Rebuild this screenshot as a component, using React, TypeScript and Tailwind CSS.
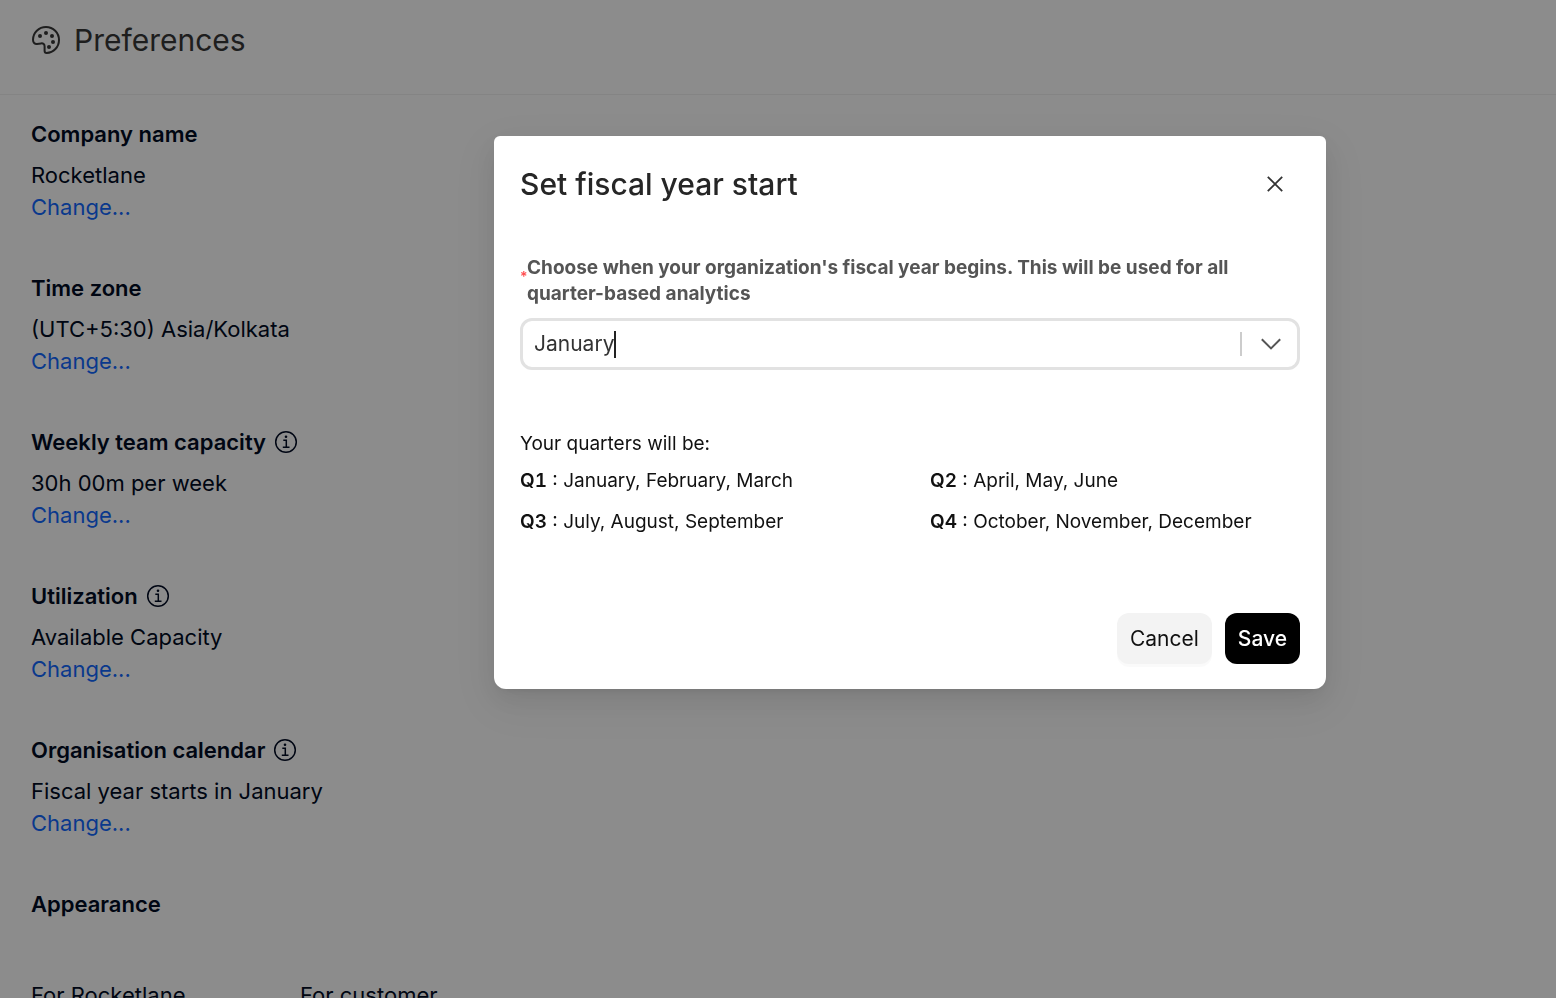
import React, { useState } from 'react';

interface Preference {
  title: string;
  value: string;
  hasInfo?: boolean;
}

const PREFERENCES: Preference[] = [
  { title: 'Company name', value: 'Rocketlane' },
  { title: 'Time zone', value: '(UTC+5:30) Asia/Kolkata' },
  { title: 'Weekly team capacity', value: '30h 00m per week', hasInfo: true },
  { title: 'Utilization', value: 'Available Capacity', hasInfo: true },
  { title: 'Organisation calendar', value: 'Fiscal year starts in January', hasInfo: true },
];

const QUARTERS = [
  { name: 'Q1', months: 'January, February, March' },
  { name: 'Q2', months: 'April, May, June' },
  { name: 'Q3', months: 'July, August, September' },
  { name: 'Q4', months: 'October, November, December' },
];

export default function App() {
  return (
    <div className="h-screen overflow-hidden bg-white font-['Inter',sans-serif] text-[22px] leading-8 text-[#000b24]">
      <header className="flex h-[95px] items-start gap-3.5 border-b border-[#f0f0f0] px-8 pt-5 text-[#383838]">
        <PaletteIcon />
        <h1 className="text-[30px] leading-10">Preferences</h1>
      </header>

      <main className="flex flex-col gap-[49px] px-[31px] pt-[23px]">
        {PREFERENCES.map((p) => (
          <PreferenceItem key={p.title} {...p} />
        ))}

        <section>
          <h2 className="font-semibold">Appearance</h2>
          <div className="mt-[59px] flex">
            <p className="w-[269px]">For Rocketlane</p>
            <p>For customer</p>
          </div>
        </section>
      </main>

      <FiscalYearModal />
    </div>
  );
}

function PreferenceItem({ title, value, hasInfo }: Preference) {
  return (
    <section>
      <h2 className="mb-[9px] flex items-center gap-2 font-semibold">
        {title}
        {hasInfo && <InfoIcon />}
      </h2>
      <p>{value}</p>
      <a href="#" className="block w-fit text-[#1268ff]">Change...</a>
    </section>
  );
}

function FiscalYearModal() {
  const [month, setMonth] = useState('January');

  return (
    <div className="fixed inset-0 flex items-start justify-center bg-black/45 pt-[136px] pl-[264px]">
      <div
        role="dialog"
        aria-modal="true"
        aria-labelledby="fiscal-title"
        className="w-full max-w-[832px] rounded-t-md rounded-b-xl bg-white px-[26px] pt-7 pb-[25px] shadow-[0_10px_26px_0_rgba(0,0,0,0.08),0_5px_10px_-6px_rgba(0,0,0,0.12),0_14px_45px_13px_rgba(0,0,0,0.05)]"
      >
        <div className="flex items-center justify-between pr-3">
          <h2 id="fiscal-title" className="text-[30px] leading-10 font-medium text-[#262626]">
            Set fiscal year start
          </h2>
          <button type="button" aria-label="Close" className="flex size-[26px] items-center justify-center text-[#333]">
            <svg viewBox="0 0 16 16" className="size-4" fill="none" stroke="currentColor" strokeWidth="1.8">
              <path d="M.8.8l14.4 14.4M15.2.8L.8 15.2" />
            </svg>
          </button>
        </div>

        <div className="mt-[51px] flex items-center">
          <span className="w-[7px] pb-2 text-sm leading-4 font-semibold text-[#ff4d4f]" aria-hidden="true">*</span>
          <label htmlFor="fiscal-month" className="flex-1 text-[19px] leading-[26px] font-bold text-[#555]">
            Choose when your organization's fiscal year begins. This will be used for all quarter-based analytics
          </label>
        </div>

        <div className="mt-[11px] flex h-[52px] items-center rounded-xl border-3 border-[#e2e2e2] pr-4 pl-[11px] text-[21px] text-[#333]">
          <input
            id="fiscal-month"
            role="combobox"
            aria-expanded="false"
            value={month}
            onChange={(e) => setMonth(e.target.value)}
            className="field-sizing-content caret-transparent outline-none"
          />
          <span className="h-[27px] w-0.5 bg-[#222]" />
          <span className="ml-auto h-6 w-0.5 bg-[#ccc]" />
          <button type="button" aria-label="Show months" className="ml-[19px] text-[#555]">
            <svg viewBox="0 0 20 12" className="h-3 w-5" fill="none" stroke="currentColor" strokeWidth="2">
              <path d="M.8 1.2L10 10.4l9.2-9.2" />
            </svg>
          </button>
        </div>

        <div className="mt-[61px] text-[19px] leading-[26px] text-[#111]">
          <p>Your quarters will be:</p>
          <ul className="mt-[11px] grid grid-cols-2 gap-x-10 gap-y-[15px]">
            {QUARTERS.map((q) => (
              <li key={q.name}>
                <strong className="font-semibold tabular-nums">{q.name}</strong> : {q.months}
              </li>
            ))}
          </ul>
        </div>

        <div className="mt-[78px] flex justify-end gap-[13px] text-[21px]">
          <button type="button" className="h-[51px] rounded-xl bg-[#f3f3f3] px-[13px] text-[#111] shadow-[0_3px_0_rgba(0,0,0,0.02)]">
            Cancel
          </button>
          <button type="button" className="h-[51px] rounded-xl bg-black px-[13px] font-medium text-white">
            Save
          </button>
        </div>
      </div>
    </div>
  );
}

function PaletteIcon() {
  return (
    <svg viewBox="0 0 28 28" className="mt-1.5 size-7" fill="none" aria-hidden="true">
      <path
        d="M14 1C6.8 1 1 6.8 1 13.8C1 16.6 2.7 18.1 5 17.9L9 17.4C11.4 17.1 12.6 18.3 12.6 20.5V25C12.6 26.3 13.4 27 14.6 27C21.6 26.7 27 21 27 14C27 6.8 21.2 1 14 1Z"
        stroke="currentColor"
        strokeWidth="2"
      />
      <g fill="currentColor">
        <circle cx="8" cy="10" r="2" />
        <circle cx="14" cy="7" r="2" />
        <circle cx="20" cy="10" r="2" />
        <circle cx="21" cy="16" r="2" />
        <circle cx="17" cy="21" r="2" />
      </g>
    </svg>
  );
}

function InfoIcon() {
  return (
    <svg viewBox="0 0 24 24" className="size-6" fill="none" stroke="currentColor" strokeWidth="1.5" aria-hidden="true">
      <circle cx="12" cy="12" r="10.3" />
      <path d="M9.3 10.3H12.3V17M8.8 17.2H15.5" />
      <circle cx="12" cy="6.7" r="1.3" fill="currentColor" stroke="none" />
    </svg>
  );
}
